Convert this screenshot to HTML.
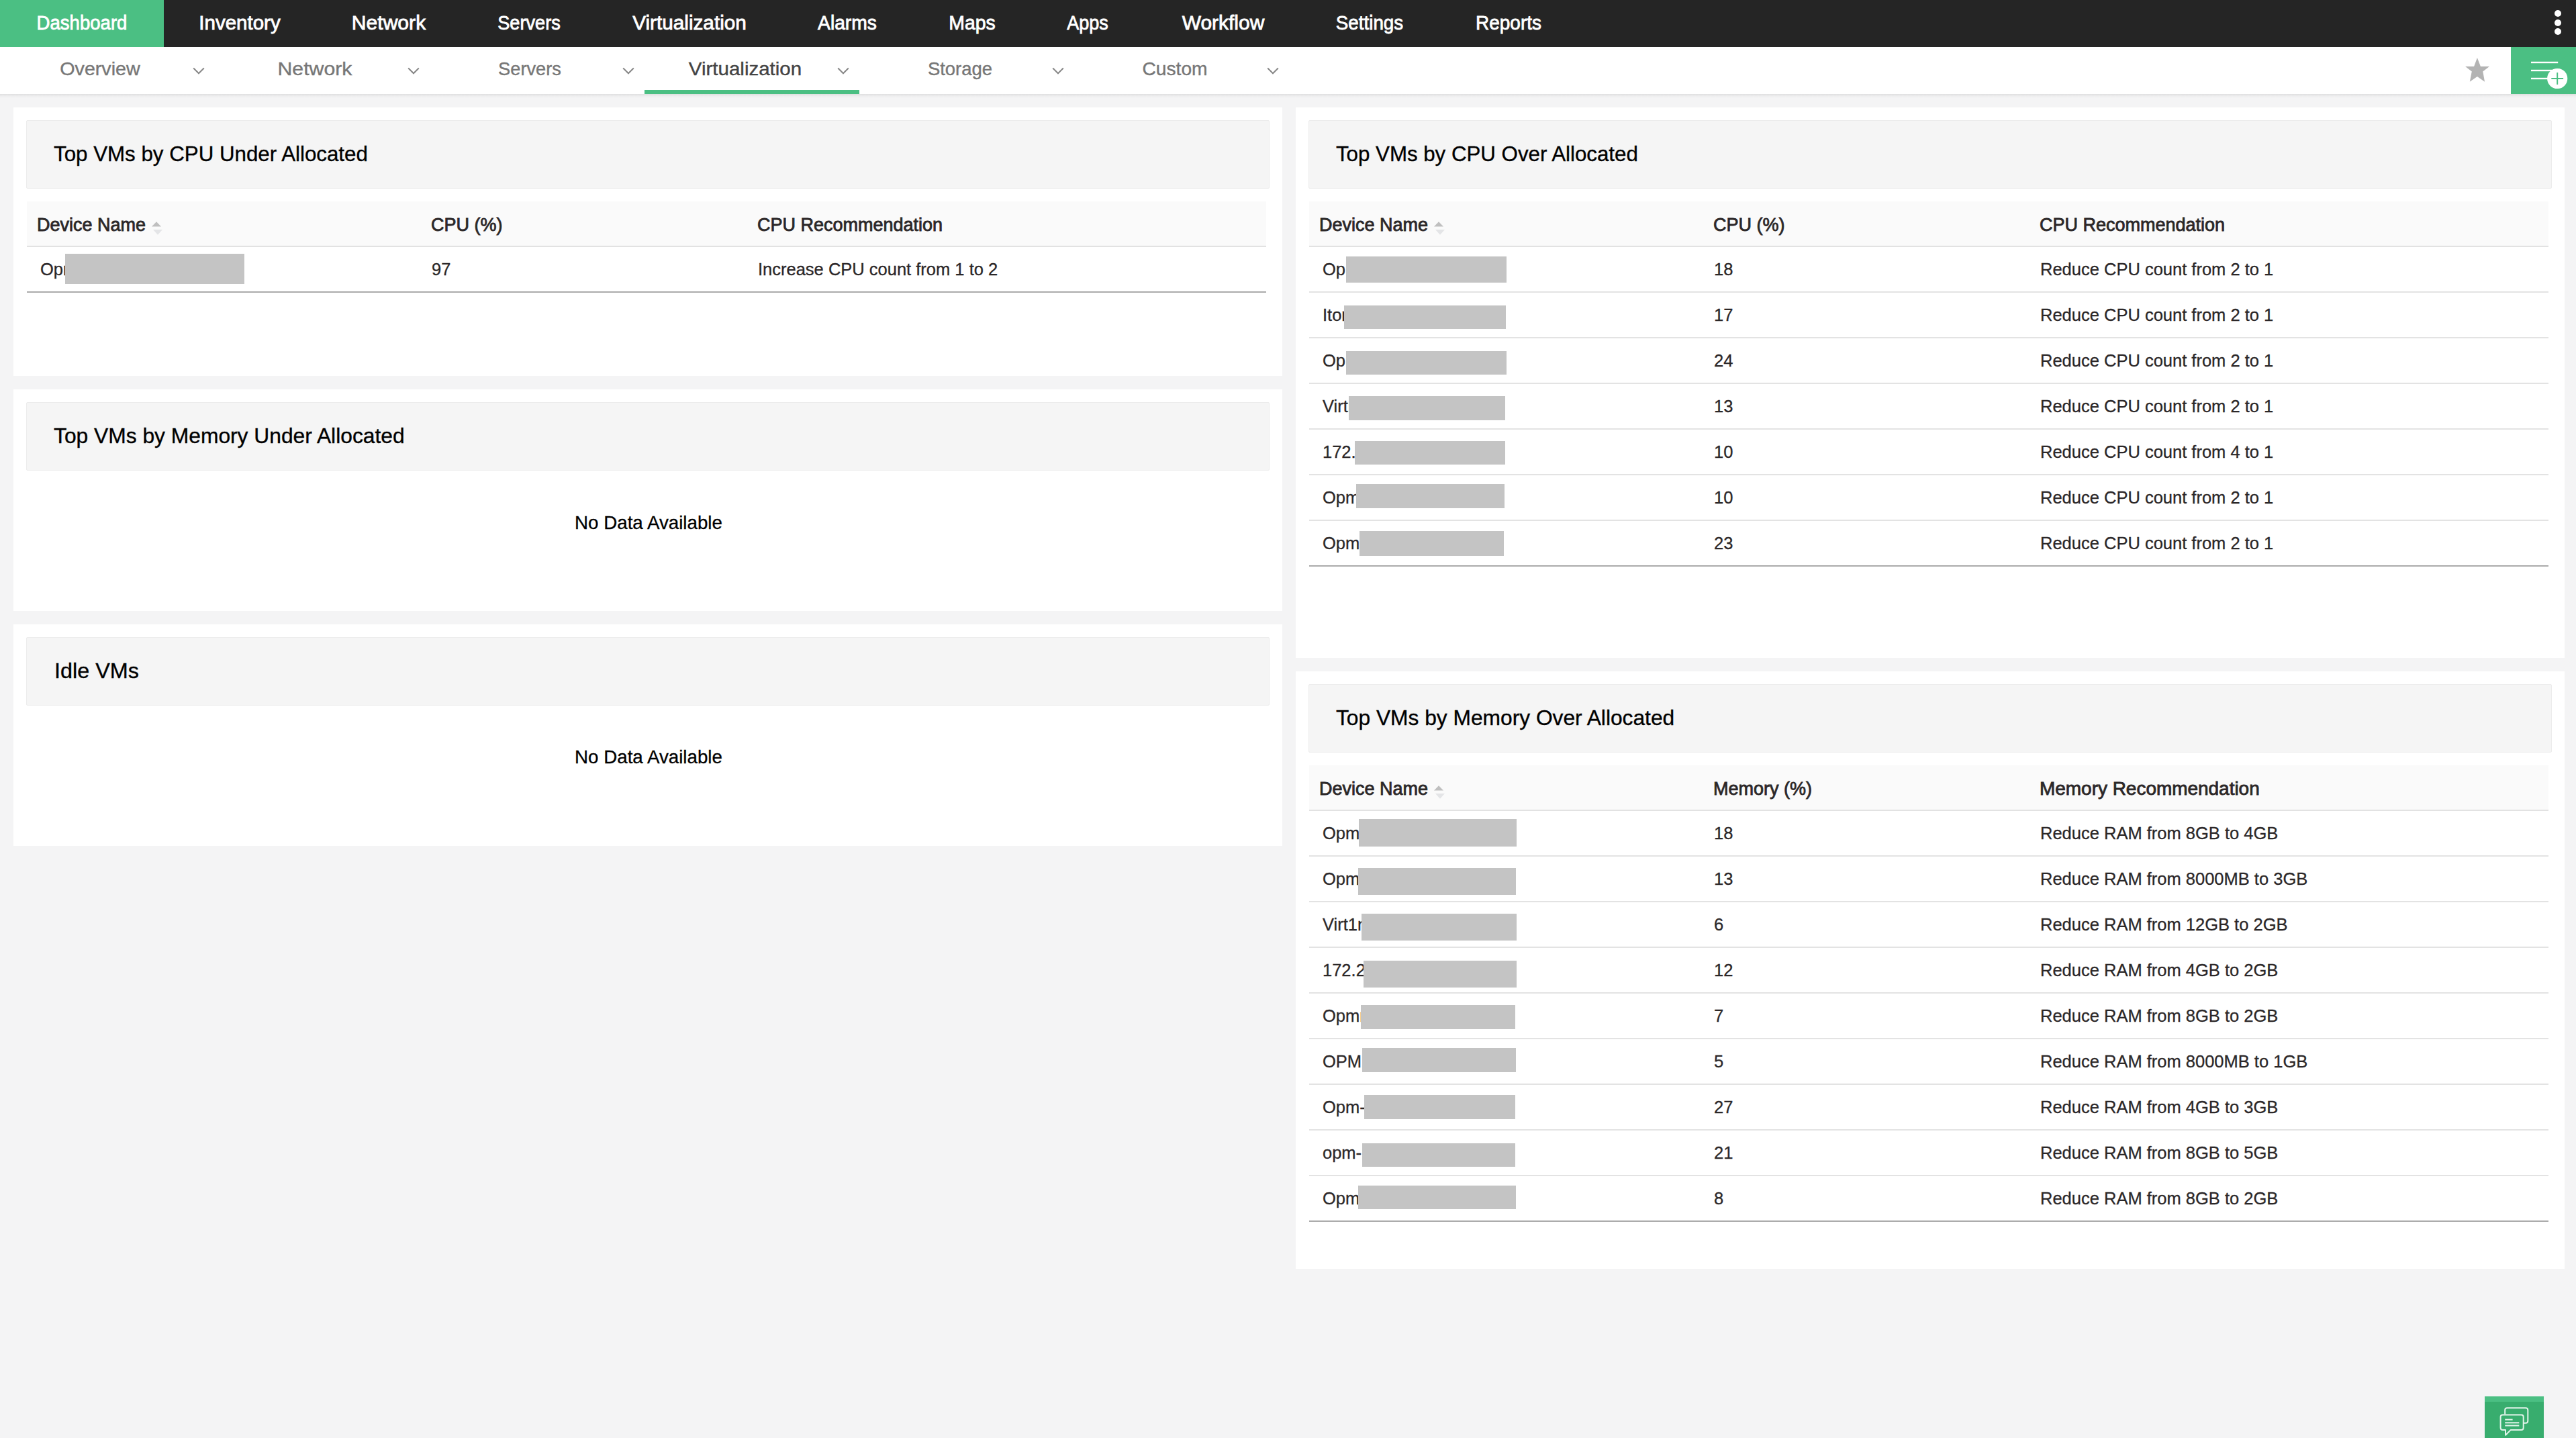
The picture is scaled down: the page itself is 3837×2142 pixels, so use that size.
<!DOCTYPE html>
<html><head><meta charset="utf-8"><title>Virtualization Dashboard</title>
<style>
html,body{margin:0;padding:0;}
body{width:3837px;height:2142px;overflow:hidden;background:#f4f4f5;position:relative;font-family:"Liberation Sans", sans-serif;}
.t{position:absolute;white-space:nowrap;}
.b{position:absolute;}
</style></head><body>
<div class="b" style="left:0px;top:0px;width:3837px;height:70px;background:#252525;"></div>
<div class="b" style="left:0px;top:0px;width:244px;height:70px;background:#4bbf83;"></div>
<div class="t" style="left:-28.3px;top:19.9px;width:300px;text-align:center;font-size:29px;line-height:29px;color:#ffffff;font-weight:normal;transform:scaleX(0.9500);transform-origin:50% 0;-webkit-text-stroke:0.8px #fff;">Dashboard</div>
<div class="t" style="left:207.4px;top:19.9px;width:300px;text-align:center;font-size:29px;line-height:29px;color:#ffffff;font-weight:normal;transform:scaleX(1.0180);transform-origin:50% 0;-webkit-text-stroke:0.8px #fff;">Inventory</div>
<div class="t" style="left:429.4px;top:19.9px;width:300px;text-align:center;font-size:29px;line-height:29px;color:#ffffff;font-weight:normal;transform:scaleX(1.0380);transform-origin:50% 0;-webkit-text-stroke:0.8px #fff;">Network</div>
<div class="t" style="left:638.3px;top:19.9px;width:300px;text-align:center;font-size:29px;line-height:29px;color:#ffffff;font-weight:normal;transform:scaleX(0.9370);transform-origin:50% 0;-webkit-text-stroke:0.8px #fff;">Servers</div>
<div class="t" style="left:876.8px;top:19.9px;width:300px;text-align:center;font-size:29px;line-height:29px;color:#ffffff;font-weight:normal;transform:scaleX(1.0250);transform-origin:50% 0;-webkit-text-stroke:0.8px #fff;">Virtualization</div>
<div class="t" style="left:1112.0px;top:19.9px;width:300px;text-align:center;font-size:29px;line-height:29px;color:#ffffff;font-weight:normal;transform:scaleX(0.9740);transform-origin:50% 0;-webkit-text-stroke:0.8px #fff;">Alarms</div>
<div class="t" style="left:1297.6px;top:19.9px;width:300px;text-align:center;font-size:29px;line-height:29px;color:#ffffff;font-weight:normal;transform:scaleX(0.9790);transform-origin:50% 0;-webkit-text-stroke:0.8px #fff;">Maps</div>
<div class="t" style="left:1470.2px;top:19.9px;width:300px;text-align:center;font-size:29px;line-height:29px;color:#ffffff;font-weight:normal;transform:scaleX(0.9320);transform-origin:50% 0;-webkit-text-stroke:0.8px #fff;">Apps</div>
<div class="t" style="left:1671.5px;top:19.9px;width:300px;text-align:center;font-size:29px;line-height:29px;color:#ffffff;font-weight:normal;transform:scaleX(1.0330);transform-origin:50% 0;-webkit-text-stroke:0.8px #fff;">Workflow</div>
<div class="t" style="left:1890.4px;top:19.9px;width:300px;text-align:center;font-size:29px;line-height:29px;color:#ffffff;font-weight:normal;transform:scaleX(0.9580);transform-origin:50% 0;-webkit-text-stroke:0.8px #fff;">Settings</div>
<div class="t" style="left:2097.4px;top:19.9px;width:300px;text-align:center;font-size:29px;line-height:29px;color:#ffffff;font-weight:normal;transform:scaleX(0.9640);transform-origin:50% 0;-webkit-text-stroke:0.8px #fff;">Reports</div>
<div class="b" style="left:3804.9px;top:14.8px;width:10.4px;height:10.4px;border-radius:50%;background:#fff"></div>
<div class="b" style="left:3804.9px;top:28.6px;width:10.4px;height:10.4px;border-radius:50%;background:#fff"></div>
<div class="b" style="left:3804.9px;top:42.0px;width:10.4px;height:10.4px;border-radius:50%;background:#fff"></div>
<div class="b" style="left:0px;top:70px;width:3837px;height:70px;background:#ffffff;"></div>
<div class="b" style="left:0;top:140px;width:3837px;height:6px;background:linear-gradient(rgba(0,0,0,0.085),rgba(0,0,0,0.02) 60%,rgba(0,0,0,0))"></div>
<div class="t" style="left:-0.9px;top:88.6px;width:300px;text-align:center;font-size:28px;line-height:28px;color:#777777;font-weight:normal;transform:scaleX(1.0240);transform-origin:50% 0;-webkit-text-stroke:0.4px #777777;">Overview</div>
<svg class="b" style="left:286px;top:99px" width="20" height="14" viewBox="0 0 20 14"><polyline points="2.2,2.5 10,10.3 17.8,2.5" fill="none" stroke="#888" stroke-width="2"/></svg>
<div class="t" style="left:318.8px;top:88.6px;width:300px;text-align:center;font-size:28px;line-height:28px;color:#777777;font-weight:normal;transform:scaleX(1.0800);transform-origin:50% 0;-webkit-text-stroke:0.4px #777777;">Network</div>
<svg class="b" style="left:606px;top:99px" width="20" height="14" viewBox="0 0 20 14"><polyline points="2.2,2.5 10,10.3 17.8,2.5" fill="none" stroke="#888" stroke-width="2"/></svg>
<div class="t" style="left:639.0px;top:88.6px;width:300px;text-align:center;font-size:28px;line-height:28px;color:#777777;font-weight:normal;transform:scaleX(0.9720);transform-origin:50% 0;-webkit-text-stroke:0.4px #777777;">Servers</div>
<svg class="b" style="left:926px;top:99px" width="20" height="14" viewBox="0 0 20 14"><polyline points="2.2,2.5 10,10.3 17.8,2.5" fill="none" stroke="#888" stroke-width="2"/></svg>
<div class="t" style="left:960.2px;top:88.6px;width:300px;text-align:center;font-size:28px;line-height:28px;color:#444444;font-weight:normal;transform:scaleX(1.0530);transform-origin:50% 0;-webkit-text-stroke:0.4px #444444;">Virtualization</div>
<svg class="b" style="left:1246px;top:99px" width="20" height="14" viewBox="0 0 20 14"><polyline points="2.2,2.5 10,10.3 17.8,2.5" fill="none" stroke="#888" stroke-width="2"/></svg>
<div class="t" style="left:1279.8px;top:88.6px;width:300px;text-align:center;font-size:28px;line-height:28px;color:#777777;font-weight:normal;transform:scaleX(0.9800);transform-origin:50% 0;-webkit-text-stroke:0.4px #777777;">Storage</div>
<svg class="b" style="left:1566px;top:99px" width="20" height="14" viewBox="0 0 20 14"><polyline points="2.2,2.5 10,10.3 17.8,2.5" fill="none" stroke="#888" stroke-width="2"/></svg>
<div class="t" style="left:1600.0px;top:88.6px;width:300px;text-align:center;font-size:28px;line-height:28px;color:#777777;font-weight:normal;transform:scaleX(1.0060);transform-origin:50% 0;-webkit-text-stroke:0.4px #777777;">Custom</div>
<svg class="b" style="left:1886px;top:99px" width="20" height="14" viewBox="0 0 20 14"><polyline points="2.2,2.5 10,10.3 17.8,2.5" fill="none" stroke="#888" stroke-width="2"/></svg>
<div class="b" style="left:960px;top:134px;width:320px;height:6px;background:#4bbf83;"></div>
<svg class="b" style="left:3671px;top:85px" width="38" height="38" viewBox="0 0 38 38"><polygon points="18.9,0.9 23.9,14 37,14 27.3,21.6 30,36.7 18.9,28.9 7.8,36.7 10.8,21.6 1.1,14 14.1,14" fill="#b3b3b3"/></svg>
<div class="b" style="left:3740px;top:70px;width:97px;height:70px;background:#4bbf83;"></div>
<svg class="b" style="left:3740px;top:70px" width="97" height="70" viewBox="0 0 97 70"><rect x="30" y="21.8" width="40.2" height="2.4" fill="#fff"/><rect x="30" y="33.8" width="36" height="2.4" fill="#fff"/><rect x="30" y="45.8" width="36" height="2.4" fill="#fff"/><circle cx="69.2" cy="47" r="15.1" fill="#fff"/><rect x="60.3" y="46" width="17.8" height="2" fill="#4bbf83"/><rect x="68.2" y="38.1" width="2" height="17.8" fill="#4bbf83"/></svg>
<div class="b" style="left:20px;top:160px;width:1890px;height:400px;background:#ffffff;"></div>
<div class="b" style="left:39px;top:179px;width:1852px;height:102px;background:#f5f5f5;border:1px solid #ececec;box-sizing:border-box;border-radius:2px"></div>
<div class="t" style="left:80.0px;top:214.1px;font-size:31.5px;line-height:31.5px;color:#000000;font-weight:normal;transform:scaleX(0.9934);transform-origin:0 0;-webkit-text-stroke:0.35px #000;">Top VMs by CPU Under Allocated</div>
<div class="b" style="left:40px;top:300px;width:1846px;height:66px;background:#fafafa;"></div>
<div class="b" style="left:40px;top:366px;width:1846px;height:2px;background:#e2e2e2;"></div>
<div class="t" style="left:55.0px;top:321.9px;font-size:27px;line-height:27px;color:#2b2728;font-weight:normal;-webkit-text-stroke:0.8px #2b2728;">Device Name</div>
<div class="t" style="left:642.0px;top:321.9px;font-size:27px;line-height:27px;color:#2b2728;font-weight:normal;-webkit-text-stroke:0.8px #2b2728;">CPU (%)</div>
<div class="t" style="left:1128.0px;top:321.9px;font-size:27px;line-height:27px;color:#2b2728;font-weight:normal;-webkit-text-stroke:0.8px #2b2728;">CPU Recommendation</div>
<svg class="b" style="left:225px;top:329px" width="20" height="22" viewBox="0 0 20 22"><polygon points="1,8.5 15,8.5 8,1.2" fill="#bfbfbf"/><polygon points="3,12.9 17,12.9 10,20.7" fill="#e4e5e7"/></svg>
<div class="t" style="left:60.0px;top:389.2px;font-size:25.5px;line-height:25.5px;color:#2b2728;font-weight:normal;-webkit-text-stroke:0.3px #2b2728;">Opmnopq</div>
<div class="t" style="left:643.0px;top:389.2px;font-size:25.5px;line-height:25.5px;color:#2b2728;font-weight:normal;-webkit-text-stroke:0.3px #2b2728;">97</div>
<div class="t" style="left:1129.0px;top:389.2px;font-size:25.5px;line-height:25.5px;color:#2b2728;font-weight:normal;-webkit-text-stroke:0.3px #2b2728;">Increase CPU count from 1 to 2</div>
<div class="b" style="left:97px;top:378px;width:267px;height:45px;background:#c4c4c4;"></div>
<div class="b" style="left:40px;top:434px;width:1846px;height:2px;background:#ababab;"></div>
<div class="b" style="left:20px;top:580px;width:1890px;height:330px;background:#ffffff;"></div>
<div class="b" style="left:39px;top:599px;width:1852px;height:102px;background:#f5f5f5;border:1px solid #ececec;box-sizing:border-box;border-radius:2px"></div>
<div class="t" style="left:80.0px;top:634.1px;font-size:31.5px;line-height:31.5px;color:#000000;font-weight:normal;transform:scaleX(1.0085);transform-origin:0 0;-webkit-text-stroke:0.35px #000;">Top VMs by Memory Under Allocated</div>
<div class="t" style="left:665.5px;top:764.7px;width:600px;text-align:center;font-size:28px;line-height:28px;color:#000000;font-weight:normal;transform:scaleX(0.9900);transform-origin:50% 0;-webkit-text-stroke:0.3px #000;">No Data Available</div>
<div class="b" style="left:20px;top:930px;width:1890px;height:330px;background:#ffffff;"></div>
<div class="b" style="left:39px;top:949px;width:1852px;height:102px;background:#f5f5f5;border:1px solid #ececec;box-sizing:border-box;border-radius:2px"></div>
<div class="t" style="left:80.5px;top:984.1px;font-size:31.5px;line-height:31.5px;color:#000000;font-weight:normal;transform:scaleX(1.0270);transform-origin:0 0;-webkit-text-stroke:0.35px #000;">Idle VMs</div>
<div class="t" style="left:665.5px;top:1114.3px;width:600px;text-align:center;font-size:28px;line-height:28px;color:#000000;font-weight:normal;transform:scaleX(0.9900);transform-origin:50% 0;-webkit-text-stroke:0.3px #000;">No Data Available</div>
<div class="b" style="left:1930px;top:160px;width:1890px;height:820px;background:#ffffff;"></div>
<div class="b" style="left:1949px;top:179px;width:1852px;height:102px;background:#f5f5f5;border:1px solid #ececec;box-sizing:border-box;border-radius:2px"></div>
<div class="t" style="left:1990.0px;top:214.1px;font-size:31.5px;line-height:31.5px;color:#000000;font-weight:normal;transform:scaleX(0.9920);transform-origin:0 0;-webkit-text-stroke:0.35px #000;">Top VMs by CPU Over Allocated</div>
<div class="b" style="left:1950px;top:300px;width:1846px;height:66px;background:#fafafa;"></div>
<div class="b" style="left:1950px;top:366px;width:1846px;height:2px;background:#e2e2e2;"></div>
<div class="t" style="left:1965.0px;top:321.9px;font-size:27px;line-height:27px;color:#2b2728;font-weight:normal;-webkit-text-stroke:0.8px #2b2728;">Device Name</div>
<div class="t" style="left:2552.0px;top:321.9px;font-size:27px;line-height:27px;color:#2b2728;font-weight:normal;-webkit-text-stroke:0.8px #2b2728;">CPU (%)</div>
<div class="t" style="left:3038.0px;top:321.9px;font-size:27px;line-height:27px;color:#2b2728;font-weight:normal;-webkit-text-stroke:0.8px #2b2728;">CPU Recommendation</div>
<svg class="b" style="left:2135px;top:329px" width="20" height="22" viewBox="0 0 20 22"><polygon points="1,8.5 15,8.5 8,1.2" fill="#bfbfbf"/><polygon points="3,12.9 17,12.9 10,20.7" fill="#e4e5e7"/></svg>
<div class="t" style="left:1970.0px;top:389.2px;font-size:25.5px;line-height:25.5px;color:#2b2728;font-weight:normal;-webkit-text-stroke:0.3px #2b2728;">Opmnopq</div>
<div class="t" style="left:2553.0px;top:389.2px;font-size:25.5px;line-height:25.5px;color:#2b2728;font-weight:normal;-webkit-text-stroke:0.3px #2b2728;">18</div>
<div class="t" style="left:3039.0px;top:389.2px;font-size:25.5px;line-height:25.5px;color:#2b2728;font-weight:normal;-webkit-text-stroke:0.3px #2b2728;">Reduce CPU count from 2 to 1</div>
<div class="b" style="left:2005px;top:382px;width:239px;height:39px;background:#c4c4c4;"></div>
<div class="b" style="left:1950px;top:434px;width:1846px;height:2px;background:#e3e3e3;"></div>
<div class="t" style="left:1970.0px;top:457.2px;font-size:25.5px;line-height:25.5px;color:#2b2728;font-weight:normal;-webkit-text-stroke:0.3px #2b2728;">Itomnopq</div>
<div class="t" style="left:2553.0px;top:457.2px;font-size:25.5px;line-height:25.5px;color:#2b2728;font-weight:normal;-webkit-text-stroke:0.3px #2b2728;">17</div>
<div class="t" style="left:3039.0px;top:457.2px;font-size:25.5px;line-height:25.5px;color:#2b2728;font-weight:normal;-webkit-text-stroke:0.3px #2b2728;">Reduce CPU count from 2 to 1</div>
<div class="b" style="left:2002px;top:455px;width:241px;height:35px;background:#c4c4c4;"></div>
<div class="b" style="left:1950px;top:502px;width:1846px;height:2px;background:#e3e3e3;"></div>
<div class="t" style="left:1970.0px;top:525.2px;font-size:25.5px;line-height:25.5px;color:#2b2728;font-weight:normal;-webkit-text-stroke:0.3px #2b2728;">Opmnopq</div>
<div class="t" style="left:2553.0px;top:525.2px;font-size:25.5px;line-height:25.5px;color:#2b2728;font-weight:normal;-webkit-text-stroke:0.3px #2b2728;">24</div>
<div class="t" style="left:3039.0px;top:525.2px;font-size:25.5px;line-height:25.5px;color:#2b2728;font-weight:normal;-webkit-text-stroke:0.3px #2b2728;">Reduce CPU count from 2 to 1</div>
<div class="b" style="left:2005px;top:523px;width:239px;height:35px;background:#c4c4c4;"></div>
<div class="b" style="left:1950px;top:570px;width:1846px;height:2px;background:#e3e3e3;"></div>
<div class="t" style="left:1970.0px;top:593.2px;font-size:25.5px;line-height:25.5px;color:#2b2728;font-weight:normal;-webkit-text-stroke:0.3px #2b2728;">Virtmnopq</div>
<div class="t" style="left:2553.0px;top:593.2px;font-size:25.5px;line-height:25.5px;color:#2b2728;font-weight:normal;-webkit-text-stroke:0.3px #2b2728;">13</div>
<div class="t" style="left:3039.0px;top:593.2px;font-size:25.5px;line-height:25.5px;color:#2b2728;font-weight:normal;-webkit-text-stroke:0.3px #2b2728;">Reduce CPU count from 2 to 1</div>
<div class="b" style="left:2009px;top:590px;width:233px;height:36px;background:#c4c4c4;"></div>
<div class="b" style="left:1950px;top:638px;width:1846px;height:2px;background:#e3e3e3;"></div>
<div class="t" style="left:1970.0px;top:661.2px;font-size:25.5px;line-height:25.5px;color:#2b2728;font-weight:normal;-webkit-text-stroke:0.3px #2b2728;">172.mnopq</div>
<div class="t" style="left:2553.0px;top:661.2px;font-size:25.5px;line-height:25.5px;color:#2b2728;font-weight:normal;-webkit-text-stroke:0.3px #2b2728;">10</div>
<div class="t" style="left:3039.0px;top:661.2px;font-size:25.5px;line-height:25.5px;color:#2b2728;font-weight:normal;-webkit-text-stroke:0.3px #2b2728;">Reduce CPU count from 4 to 1</div>
<div class="b" style="left:2018px;top:657px;width:224px;height:35px;background:#c4c4c4;"></div>
<div class="b" style="left:1950px;top:706px;width:1846px;height:2px;background:#e3e3e3;"></div>
<div class="t" style="left:1970.0px;top:729.2px;font-size:25.5px;line-height:25.5px;color:#2b2728;font-weight:normal;-webkit-text-stroke:0.3px #2b2728;">Opmmnopq</div>
<div class="t" style="left:2553.0px;top:729.2px;font-size:25.5px;line-height:25.5px;color:#2b2728;font-weight:normal;-webkit-text-stroke:0.3px #2b2728;">10</div>
<div class="t" style="left:3039.0px;top:729.2px;font-size:25.5px;line-height:25.5px;color:#2b2728;font-weight:normal;-webkit-text-stroke:0.3px #2b2728;">Reduce CPU count from 2 to 1</div>
<div class="b" style="left:2020px;top:721px;width:221px;height:36px;background:#c4c4c4;"></div>
<div class="b" style="left:1950px;top:774px;width:1846px;height:2px;background:#e3e3e3;"></div>
<div class="t" style="left:1970.0px;top:797.2px;font-size:25.5px;line-height:25.5px;color:#2b2728;font-weight:normal;-webkit-text-stroke:0.3px #2b2728;">Opmmnopq</div>
<div class="t" style="left:2553.0px;top:797.2px;font-size:25.5px;line-height:25.5px;color:#2b2728;font-weight:normal;-webkit-text-stroke:0.3px #2b2728;">23</div>
<div class="t" style="left:3039.0px;top:797.2px;font-size:25.5px;line-height:25.5px;color:#2b2728;font-weight:normal;-webkit-text-stroke:0.3px #2b2728;">Reduce CPU count from 2 to 1</div>
<div class="b" style="left:2025px;top:791px;width:215px;height:37px;background:#c4c4c4;"></div>
<div class="b" style="left:1950px;top:842px;width:1846px;height:2px;background:#ababab;"></div>
<div class="b" style="left:1930px;top:1000px;width:1890px;height:890px;background:#ffffff;"></div>
<div class="b" style="left:1949px;top:1019px;width:1852px;height:102px;background:#f5f5f5;border:1px solid #ececec;box-sizing:border-box;border-radius:2px"></div>
<div class="t" style="left:1990.0px;top:1054.1px;font-size:31.5px;line-height:31.5px;color:#000000;font-weight:normal;transform:scaleX(1.0070);transform-origin:0 0;-webkit-text-stroke:0.35px #000;">Top VMs by Memory Over Allocated</div>
<div class="b" style="left:1950px;top:1140px;width:1846px;height:66px;background:#fafafa;"></div>
<div class="b" style="left:1950px;top:1206px;width:1846px;height:2px;background:#e2e2e2;"></div>
<div class="t" style="left:1965.0px;top:1161.9px;font-size:27px;line-height:27px;color:#2b2728;font-weight:normal;-webkit-text-stroke:0.8px #2b2728;">Device Name</div>
<div class="t" style="left:2552.0px;top:1161.9px;font-size:27px;line-height:27px;color:#2b2728;font-weight:normal;-webkit-text-stroke:0.8px #2b2728;">Memory (%)</div>
<div class="t" style="left:3038.0px;top:1161.9px;font-size:27px;line-height:27px;color:#2b2728;font-weight:normal;transform:scaleX(1.0350);transform-origin:0 0;-webkit-text-stroke:0.8px #2b2728;">Memory Recommendation</div>
<svg class="b" style="left:2135px;top:1169px" width="20" height="22" viewBox="0 0 20 22"><polygon points="1,8.5 15,8.5 8,1.2" fill="#bfbfbf"/><polygon points="3,12.9 17,12.9 10,20.7" fill="#e4e5e7"/></svg>
<div class="t" style="left:1970.0px;top:1229.2px;font-size:25.5px;line-height:25.5px;color:#2b2728;font-weight:normal;-webkit-text-stroke:0.3px #2b2728;">Opmmnopq</div>
<div class="t" style="left:2553.0px;top:1229.2px;font-size:25.5px;line-height:25.5px;color:#2b2728;font-weight:normal;-webkit-text-stroke:0.3px #2b2728;">18</div>
<div class="t" style="left:3039.0px;top:1229.2px;font-size:25.5px;line-height:25.5px;color:#2b2728;font-weight:normal;-webkit-text-stroke:0.3px #2b2728;">Reduce RAM from 8GB to 4GB</div>
<div class="b" style="left:2024px;top:1220px;width:235px;height:41px;background:#c4c4c4;"></div>
<div class="b" style="left:1950px;top:1274px;width:1846px;height:2px;background:#e3e3e3;"></div>
<div class="t" style="left:1970.0px;top:1297.2px;font-size:25.5px;line-height:25.5px;color:#2b2728;font-weight:normal;-webkit-text-stroke:0.3px #2b2728;">Opmmnopq</div>
<div class="t" style="left:2553.0px;top:1297.2px;font-size:25.5px;line-height:25.5px;color:#2b2728;font-weight:normal;-webkit-text-stroke:0.3px #2b2728;">13</div>
<div class="t" style="left:3039.0px;top:1297.2px;font-size:25.5px;line-height:25.5px;color:#2b2728;font-weight:normal;-webkit-text-stroke:0.3px #2b2728;">Reduce RAM from 8000MB to 3GB</div>
<div class="b" style="left:2023px;top:1293px;width:235px;height:40px;background:#c4c4c4;"></div>
<div class="b" style="left:1950px;top:1342px;width:1846px;height:2px;background:#e3e3e3;"></div>
<div class="t" style="left:1970.0px;top:1365.2px;font-size:25.5px;line-height:25.5px;color:#2b2728;font-weight:normal;-webkit-text-stroke:0.3px #2b2728;">Virt1mnopq</div>
<div class="t" style="left:2553.0px;top:1365.2px;font-size:25.5px;line-height:25.5px;color:#2b2728;font-weight:normal;-webkit-text-stroke:0.3px #2b2728;">6</div>
<div class="t" style="left:3039.0px;top:1365.2px;font-size:25.5px;line-height:25.5px;color:#2b2728;font-weight:normal;-webkit-text-stroke:0.3px #2b2728;">Reduce RAM from 12GB to 2GB</div>
<div class="b" style="left:2028px;top:1361px;width:231px;height:40px;background:#c4c4c4;"></div>
<div class="b" style="left:1950px;top:1410px;width:1846px;height:2px;background:#e3e3e3;"></div>
<div class="t" style="left:1970.0px;top:1433.2px;font-size:25.5px;line-height:25.5px;color:#2b2728;font-weight:normal;-webkit-text-stroke:0.3px #2b2728;">172.2mnopq</div>
<div class="t" style="left:2553.0px;top:1433.2px;font-size:25.5px;line-height:25.5px;color:#2b2728;font-weight:normal;-webkit-text-stroke:0.3px #2b2728;">12</div>
<div class="t" style="left:3039.0px;top:1433.2px;font-size:25.5px;line-height:25.5px;color:#2b2728;font-weight:normal;-webkit-text-stroke:0.3px #2b2728;">Reduce RAM from 4GB to 2GB</div>
<div class="b" style="left:2031px;top:1431px;width:228px;height:40px;background:#c4c4c4;"></div>
<div class="b" style="left:1950px;top:1478px;width:1846px;height:2px;background:#e3e3e3;"></div>
<div class="t" style="left:1970.0px;top:1501.2px;font-size:25.5px;line-height:25.5px;color:#2b2728;font-weight:normal;-webkit-text-stroke:0.3px #2b2728;">Opmmnopq</div>
<div class="t" style="left:2553.0px;top:1501.2px;font-size:25.5px;line-height:25.5px;color:#2b2728;font-weight:normal;-webkit-text-stroke:0.3px #2b2728;">7</div>
<div class="t" style="left:3039.0px;top:1501.2px;font-size:25.5px;line-height:25.5px;color:#2b2728;font-weight:normal;-webkit-text-stroke:0.3px #2b2728;">Reduce RAM from 8GB to 2GB</div>
<div class="b" style="left:2027px;top:1497px;width:230px;height:36px;background:#c4c4c4;"></div>
<div class="b" style="left:1950px;top:1546px;width:1846px;height:2px;background:#e3e3e3;"></div>
<div class="t" style="left:1970.0px;top:1569.2px;font-size:25.5px;line-height:25.5px;color:#2b2728;font-weight:normal;-webkit-text-stroke:0.3px #2b2728;">OPMmnopq</div>
<div class="t" style="left:2553.0px;top:1569.2px;font-size:25.5px;line-height:25.5px;color:#2b2728;font-weight:normal;-webkit-text-stroke:0.3px #2b2728;">5</div>
<div class="t" style="left:3039.0px;top:1569.2px;font-size:25.5px;line-height:25.5px;color:#2b2728;font-weight:normal;-webkit-text-stroke:0.3px #2b2728;">Reduce RAM from 8000MB to 1GB</div>
<div class="b" style="left:2029px;top:1561px;width:229px;height:36px;background:#c4c4c4;"></div>
<div class="b" style="left:1950px;top:1614px;width:1846px;height:2px;background:#e3e3e3;"></div>
<div class="t" style="left:1970.0px;top:1637.2px;font-size:25.5px;line-height:25.5px;color:#2b2728;font-weight:normal;-webkit-text-stroke:0.3px #2b2728;">Opm-mnopq</div>
<div class="t" style="left:2553.0px;top:1637.2px;font-size:25.5px;line-height:25.5px;color:#2b2728;font-weight:normal;-webkit-text-stroke:0.3px #2b2728;">27</div>
<div class="t" style="left:3039.0px;top:1637.2px;font-size:25.5px;line-height:25.5px;color:#2b2728;font-weight:normal;-webkit-text-stroke:0.3px #2b2728;">Reduce RAM from 4GB to 3GB</div>
<div class="b" style="left:2032px;top:1631px;width:225px;height:36px;background:#c4c4c4;"></div>
<div class="b" style="left:1950px;top:1682px;width:1846px;height:2px;background:#e3e3e3;"></div>
<div class="t" style="left:1970.0px;top:1705.2px;font-size:25.5px;line-height:25.5px;color:#2b2728;font-weight:normal;-webkit-text-stroke:0.3px #2b2728;">opm-mnopq</div>
<div class="t" style="left:2553.0px;top:1705.2px;font-size:25.5px;line-height:25.5px;color:#2b2728;font-weight:normal;-webkit-text-stroke:0.3px #2b2728;">21</div>
<div class="t" style="left:3039.0px;top:1705.2px;font-size:25.5px;line-height:25.5px;color:#2b2728;font-weight:normal;-webkit-text-stroke:0.3px #2b2728;">Reduce RAM from 8GB to 5GB</div>
<div class="b" style="left:2029px;top:1703px;width:228px;height:35px;background:#c4c4c4;"></div>
<div class="b" style="left:1950px;top:1750px;width:1846px;height:2px;background:#e3e3e3;"></div>
<div class="t" style="left:1970.0px;top:1773.2px;font-size:25.5px;line-height:25.5px;color:#2b2728;font-weight:normal;-webkit-text-stroke:0.3px #2b2728;">Opmmnopq</div>
<div class="t" style="left:2553.0px;top:1773.2px;font-size:25.5px;line-height:25.5px;color:#2b2728;font-weight:normal;-webkit-text-stroke:0.3px #2b2728;">8</div>
<div class="t" style="left:3039.0px;top:1773.2px;font-size:25.5px;line-height:25.5px;color:#2b2728;font-weight:normal;-webkit-text-stroke:0.3px #2b2728;">Reduce RAM from 8GB to 2GB</div>
<div class="b" style="left:2023px;top:1766px;width:235px;height:35px;background:#c4c4c4;"></div>
<div class="b" style="left:1950px;top:1818px;width:1846px;height:2px;background:#ababab;"></div>
<div class="b" style="left:3701px;top:2080px;width:88px;height:62px;background:#38ad6e;"></div>
<div class="b" style="left:3701px;top:2080px;width:88px;height:8px;background:#4bbf83;"></div>
<svg class="b" style="left:3701px;top:2080px" width="88" height="62" viewBox="0 0 88 62"><path d="M30.2,26.5 V20.5 Q30.2,17.3 33.4,17.3 H61.1 Q64.3,17.3 64.3,20.5 V36.6 Q64.3,39.8 61.1,39.8 H58" fill="none" stroke="rgba(255,255,255,0.85)" stroke-width="2"/><path d="M26.8,27.4 Q23.6,27.4 23.6,30.6 V46.7 Q23.6,49.9 26.8,49.9 H31 V57.8 L38.8,49.9 H54.5 Q57.7,49.9 57.7,46.7 V30.6 Q57.7,27.4 54.5,27.4 Z" fill="none" stroke="rgba(255,255,255,0.85)" stroke-width="2" stroke-linejoin="round"/><rect x="30.2" y="33.6" width="11.4" height="2" fill="rgba(255,255,255,0.85)"/><rect x="30.2" y="38.3" width="21.1" height="2" fill="rgba(255,255,255,0.85)"/><rect x="30.2" y="42.5" width="21.1" height="2" fill="rgba(255,255,255,0.85)"/></svg>
</body></html>
